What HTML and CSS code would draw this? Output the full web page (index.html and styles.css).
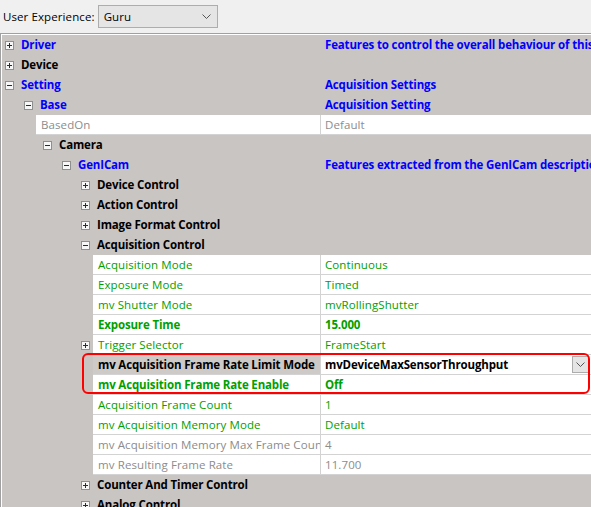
FILE: index.html
```html
<!DOCTYPE html>
<html lang="en">

<head>
    <meta charset="UTF-8">
    <title>Property Grid</title>
    <link rel="stylesheet" href="styles.css">
</head>

<body>
    <div class="toolbar">
        <span class="ux-label">User Experience:</span>
        <div class="combo">
            <span>Guru</span>
            <svg width="9" height="6" viewBox="0 0 9 6"><polyline points="0.5,0.5 4.5,4.5 8.5,0.5" fill="none" stroke="#555" stroke-width="1"/></svg>
        </div>
    </div>
    <div class="tree">
        <div class="tree-inner">
            <!-- top level groups -->
            <div class="row">
                <div class="key l0"><i class="tog plus"></i><span class="blue b">Driver</span></div>
                <div class="val blue b">Features to control the overall behaviour of this driver instance</div>
            </div>
            <div class="row">
                <div class="key l0"><i class="tog plus"></i><span class="b">Device</span></div>
                <div class="val"></div>
            </div>
            <div class="row">
                <div class="key l0"><i class="tog minus"></i><span class="blue b">Setting</span></div>
                <div class="val blue b">Acquisition Settings</div>
            </div>
            <div class="row">
                <div class="key l1"><i class="tog minus"></i><span class="blue b">Base</span></div>
                <div class="val blue b">Acquisition Setting</div>
            </div>
            <div class="row prop">
                <div class="key l1"><i class="gap"></i><span class="field grey">BasedOn</span></div>
                <div class="val grey">Default</div>
            </div>
            <div class="row">
                <div class="key l2"><i class="tog minus"></i><span class="b">Camera</span></div>
                <div class="val"></div>
            </div>
            <div class="row">
                <div class="key l3"><i class="tog minus"></i><span class="blue b">GenICam</span></div>
                <div class="val blue b">Features extracted from the GenICam description file</div>
            </div>
            <div class="row">
                <div class="key l4"><i class="tog plus"></i><span class="b">Device Control</span></div>
                <div class="val"></div>
            </div>
            <div class="row">
                <div class="key l4"><i class="tog plus"></i><span class="b">Action Control</span></div>
                <div class="val"></div>
            </div>
            <div class="row">
                <div class="key l4"><i class="tog plus"></i><span class="b">Image Format Control</span></div>
                <div class="val"></div>
            </div>
            <div class="row">
                <div class="key l4"><i class="tog minus"></i><span class="b">Acquisition Control</span></div>
                <div class="val"></div>
            </div>
            <!-- acquisition control properties -->
            <div class="row prop">
                <div class="key l4"><i class="gap"></i><span class="field green">Acquisition Mode</span></div>
                <div class="val green">Continuous</div>
            </div>
            <div class="row prop">
                <div class="key l4"><i class="gap"></i><span class="field green">Exposure Mode</span></div>
                <div class="val green">Timed</div>
            </div>
            <div class="row prop">
                <div class="key l4"><i class="gap"></i><span class="field green">mv Shutter Mode</span></div>
                <div class="val green">mvRollingShutter</div>
            </div>
            <div class="row prop">
                <div class="key l4"><i class="gap"></i><span class="field green b">Exposure Time</span></div>
                <div class="val green b">15.000</div>
            </div>
            <div class="row prop">
                <div class="key l4"><i class="tog plus"></i><span class="field green">Trigger Selector</span></div>
                <div class="val green">FrameStart</div>
            </div>
            <div class="row prop selected">
                <div class="key l4"><i class="gap"></i><span class="field b">mv Acquisition Frame Rate Limit Mode</span></div>
                <div class="val b">
                    <span class="val-text">mvDeviceMaxSensorThroughput</span>
                    <span class="drop">
                        <svg width="9" height="6" viewBox="0 0 9 6"><polyline points="0.5,0.5 4.5,4.5 8.5,0.5" fill="none" stroke="#555" stroke-width="1"/></svg>
                    </span>
                </div>
            </div>
            <div class="row prop">
                <div class="key l4"><i class="gap"></i><span class="field green b">mv Acquisition Frame Rate Enable</span></div>
                <div class="val green b">Off</div>
            </div>
            <div class="row prop">
                <div class="key l4"><i class="gap"></i><span class="field green">Acquisition Frame Count</span></div>
                <div class="val green">1</div>
            </div>
            <div class="row prop">
                <div class="key l4"><i class="gap"></i><span class="field green">mv Acquisition Memory Mode</span></div>
                <div class="val green">Default</div>
            </div>
            <div class="row prop">
                <div class="key l4"><i class="gap"></i><span class="field grey">mv Acquisition Memory Max Frame Count</span></div>
                <div class="val grey">4</div>
            </div>
            <div class="row prop">
                <div class="key l4"><i class="gap"></i><span class="field grey">mv Resulting Frame Rate</span></div>
                <div class="val grey">11.700</div>
            </div>
            <div class="row">
                <div class="key l4"><i class="tog plus"></i><span class="b">Counter And Timer Control</span></div>
                <div class="val"></div>
            </div>
            <div class="row">
                <div class="key l4"><i class="tog plus"></i><span class="b">Analog Control</span></div>
                <div class="val"></div>
            </div>
            <!-- red annotation frame -->
            <div class="highlight"></div>
        </div>
    </div>
</body>

</html>
```
FILE: styles.css
```css
* {
    margin: 0;
    padding: 0;
    box-sizing: border-box;
}

body {
    width: 591px;
    height: 507px;
    overflow: hidden;
    background: #f0f0f0;
    font-family: "Open Sans", "Noto Sans", sans-serif;
    font-size: 11.5px;
    letter-spacing: 0.1px;
    color: #000;
}
/* top bar */

.toolbar {
    display: flex;
    align-items: center;
    height: 33px;
    padding-left: 3px;
}

.ux-label {
    margin-right: 3px;
}

.combo {
    display: flex;
    align-items: center;
    justify-content: space-between;
    width: 120px;
    height: 23px;
    padding: 0 6px 0 5px;
    background: #e5e5e5;
    border: 1px solid #adadad;
}
/* tree */

.tree {
    height: 474px;
    border-top: 1px solid #a0a0a0;
    border-left: 1px solid #a0a0a0;
    overflow: hidden;
}

.tree-inner {
    position: relative;
    height: 100%;
    background: #c9c5c3;
    border-top: 1px solid #fff;
    border-left: 1px solid #fff;
}

.row {
    display: flex;
    height: 20px;
    line-height: 20px;
    white-space: nowrap;
}

.key {
    display: flex;
    align-items: center;
    flex-shrink: 0;
    width: 318px;
    height: 20px;
    overflow: hidden;
}

.l0 { padding-left: 3px; }
.l1 { padding-left: 22px; }
.l2 { padding-left: 41px; }
.l3 { padding-left: 60px; }
.l4 { padding-left: 79px; }

.val {
    flex: 1;
    height: 20px;
    padding-left: 5px;
    overflow: hidden;
}
/* +/- boxes */

.tog,
.gap {
    position: relative;
    flex-shrink: 0;
    width: 9px;
    height: 9px;
    margin-right: 7px;
}

.tog {
    border: 1px solid #8e8f8f;
    background: #f7f7f7;
}

.tog::before {
    content: "";
    position: absolute;
    left: 1px;
    top: 3px;
    width: 5px;
    height: 1px;
    background: #2b2b2b;
}

.tog.plus::after {
    content: "";
    position: absolute;
    left: 3px;
    top: 1px;
    width: 1px;
    height: 5px;
    background: #2b2b2b;
}
/* property rows */

.prop .tog,
.prop .gap {
    margin-right: 3px;
}

.prop .field {
    flex: 1;
    height: 20px;
    padding-left: 5px;
    background: #fff;
    border-bottom: 1px solid #d3d3d3;
    overflow: hidden;
}

.prop .val {
    padding-left: 4px;
    background: #fff;
    border-left: 1px solid #d3d3d3;
    border-bottom: 1px solid #d3d3d3;
}

.selected .field {
    background: #cdcac8;
}

.selected .val {
    display: flex;
    align-items: center;
    justify-content: space-between;
    padding-right: 2px;
}

.drop {
    display: flex;
    align-items: center;
    justify-content: center;
    width: 17px;
    height: 17px;
    background: #e5e5e5;
    border: 1px solid #adadad;
}

.b {
    font-weight: 700;
    letter-spacing: -0.15px;
}

.blue { color: #0000ff; }
.green { color: #00a000; }
.grey { color: #8c8c8c; }

.highlight {
    position: absolute;
    left: 80px;
    top: 318px;
    width: 508px;
    height: 41px;
    border: 2px solid #f00;
    border-radius: 6px;
    pointer-events: none;
}
```
